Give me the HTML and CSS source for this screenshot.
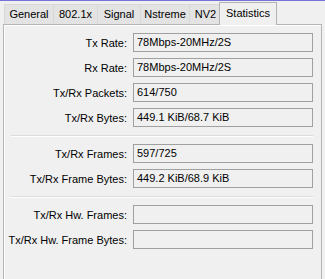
FILE: index.html
```html
<!DOCTYPE html>
<html lang="en">
  <head>
    <meta charset="UTF-8" />
    <title>Statistics</title>
    <link rel="stylesheet" href="styles.css">
  </head>
  <body>
    <div class="topline"></div>
    <div class="tabs">
      <span class="tab tab-general">General</span>
      <span class="tab tab-dot1x">802.1x</span>
      <span class="tab tab-signal">Signal</span>
      <span class="tab tab-nstreme">Nstreme</span>
      <span class="tab tab-nv2">NV2</span>
      <span class="tab tab-stats active">Statistics</span>
    </div>
    <div class="panel">
      <div class="group">
        <div class="row"><span class="label">Tx Rate:</span><span class="field">78Mbps-20MHz/2S</span></div>
        <div class="row"><span class="label">Rx Rate:</span><span class="field">78Mbps-20MHz/2S</span></div>
        <div class="row"><span class="label">Tx/Rx Packets:</span><span class="field">614/750</span></div>
        <div class="row"><span class="label">Tx/Rx Bytes:</span><span class="field">449.1 KiB/68.7 KiB</span></div>
      </div>
      <div class="sep"></div>
      <div class="group">
        <div class="row"><span class="label">Tx/Rx Frames:</span><span class="field">597/725</span></div>
        <div class="row"><span class="label">Tx/Rx Frame Bytes:</span><span class="field">449.2 KiB/68.9 KiB</span></div>
      </div>
      <div class="sep"></div>
      <div class="group">
        <div class="row"><span class="label">Tx/Rx Hw. Frames:</span><span class="field"></span></div>
        <div class="row"><span class="label">Tx/Rx Hw. Frame Bytes:</span><span class="field"></span></div>
      </div>
    </div>
  </body>
</html>
```

FILE: styles.css
```css
body {
  margin: 0;
  background-color: #f0f0f0;
  font-family: "Liberation Sans", Arial, sans-serif;
  font-size: 11px;
  color: #000;
  height: 279px;
  overflow: hidden;
}
.topline {
  height: 1px;
  background-color: #7474d8;
}
.tabs {
  display: flex;
  align-items: flex-end;
  height: 23px;
  padding-left: 4px;
}
.tab {
  box-sizing: border-box;
  height: 20px;
  line-height: 19px;
  text-align: center;
  background-color: #e3e3e3;
  border: 1px solid #d9d9d9;
  border-bottom: none;
  margin-right: -1px;
}
.tab-general { width: 50px; }
.tab-dot1x { width: 45px; }
.tab-signal { width: 44px; }
.tab-nstreme { width: 50px; }
.tab-nv2 { width: 33px; }
.tab.active {
  width: 58px;
  height: 23px;
  line-height: 21px;
  background-color: #f0f0f0;
  border-color: #b4b4b4;
  margin-left: -2px;
  position: relative;
  z-index: 1;
  margin-bottom: -1px;
}
.panel {
  box-sizing: border-box;
  margin-left: 3px;
  width: 319px;
  height: 255px;
  border: 1px solid #b4b4b4;
  border-bottom: none;
  box-shadow: inset 1px 1px 0 #fff;
  padding-top: 8px;
}
.group {
  display: flex;
  flex-direction: column;
  gap: 6px;
}
.row {
  display: grid;
  grid-template-columns: 123px 180px;
  column-gap: 6px;
  align-items: center;
}
.label {
  text-align: right;
}
.field {
  height: 17px;
  line-height: 17px;
  border: 1px solid #a0a0a0;
  padding-left: 3px;
  white-space: nowrap;
}
.sep {
  margin: 8px 0 7px 7px;
  width: 302px;
  height: 1px;
  background-color: #dcdcdc;
  border-bottom: 1px solid #fff;
}
```
